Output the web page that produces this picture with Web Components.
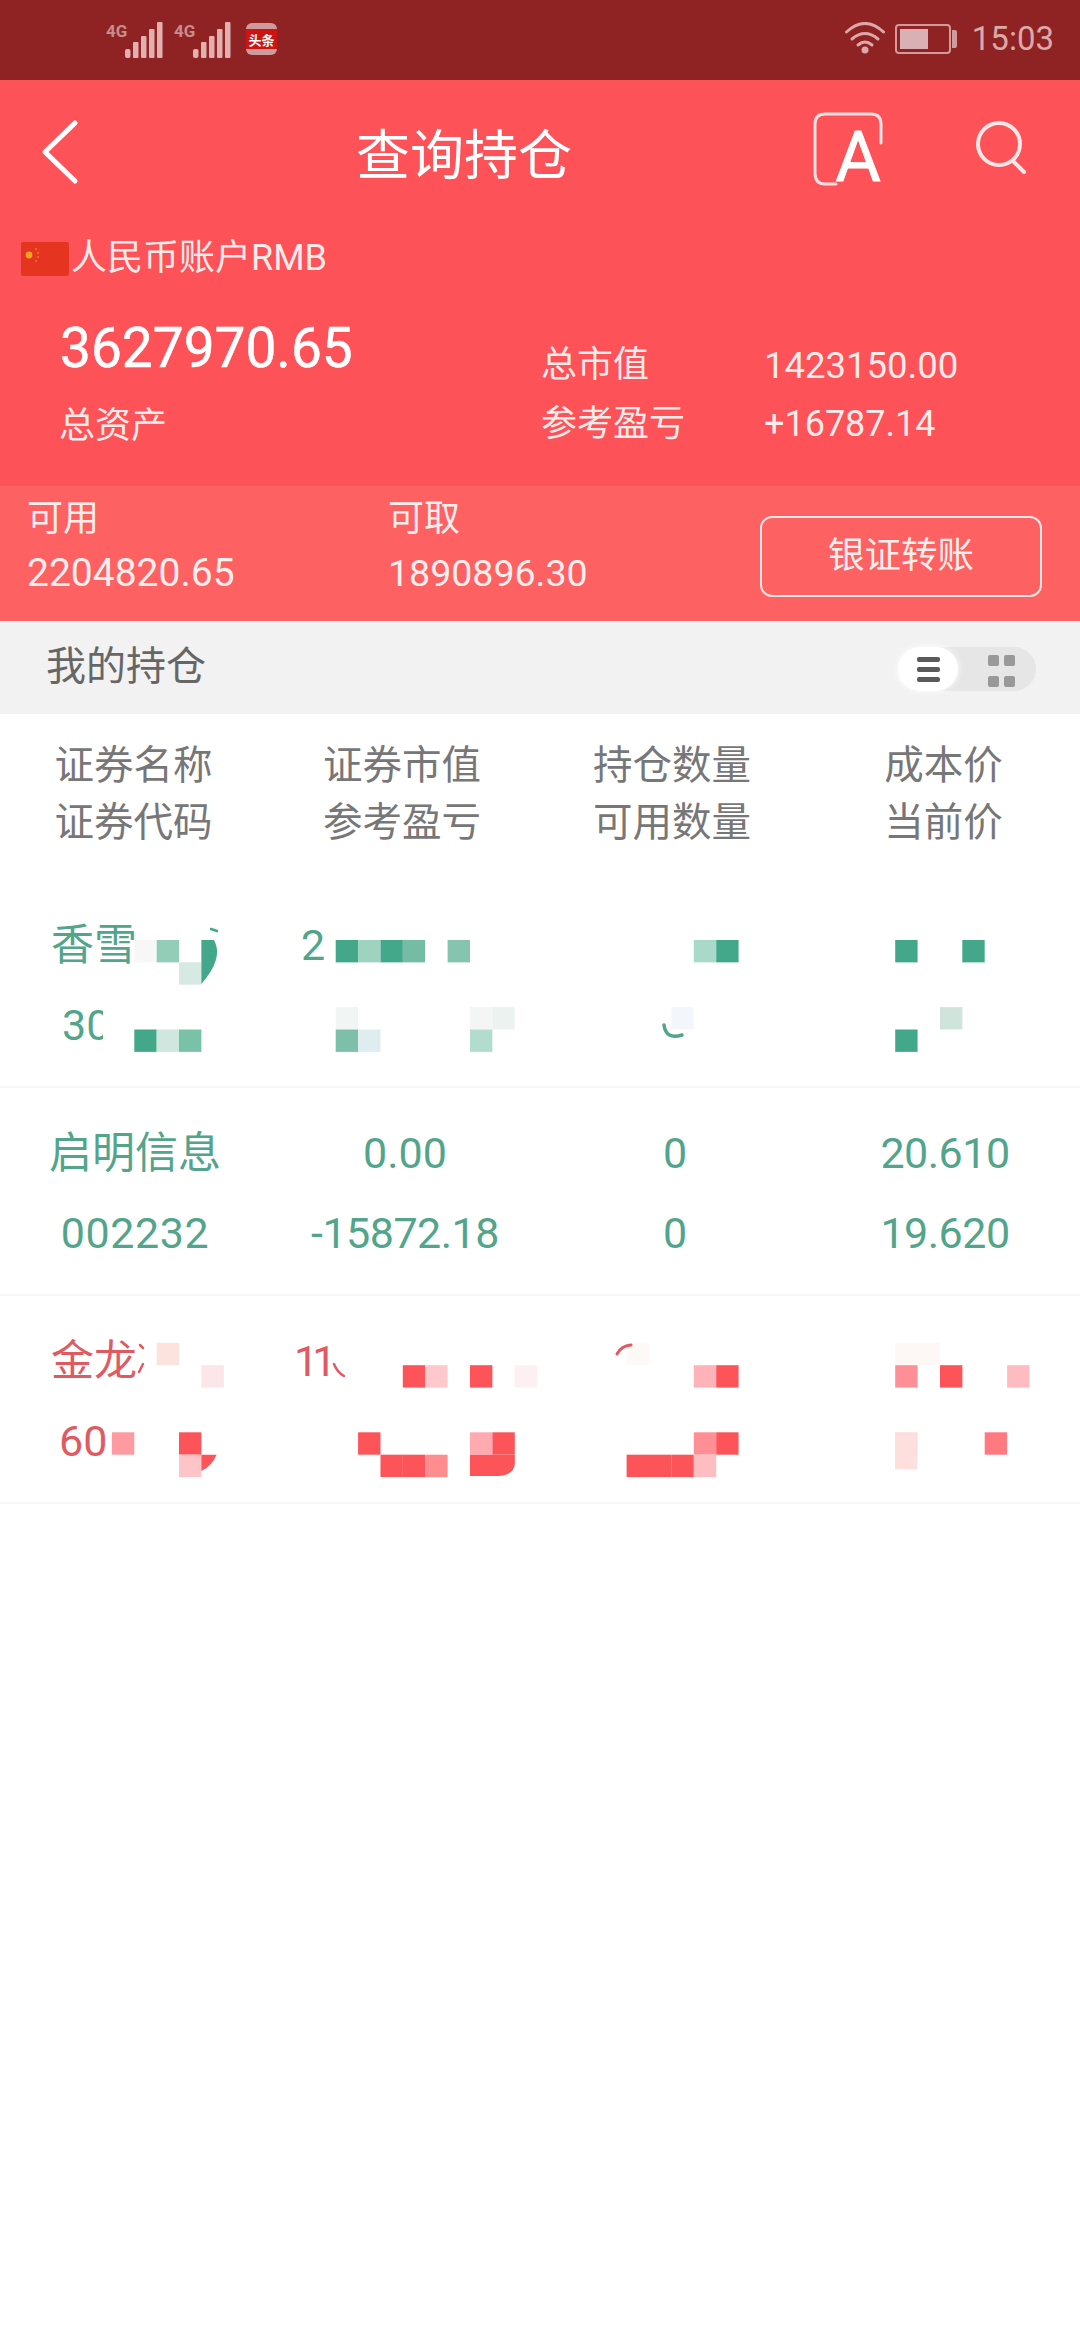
<!DOCTYPE html>
<html lang="zh-CN">
<head>
<meta charset="utf-8">
<title>查询持仓</title>
<style>
  html, body { margin: 0; background: #fff; }
  body { font-family: Roboto, "Noto Sans CJK SC", sans-serif; }
  holdings-page { width: 1080px; height: 2340px; }
</style>
</head>
<body>
<holdings-page>
  <status-bar></status-bar>
  <nav-bar title="查询持仓"></nav-bar>
  <account-summary></account-summary>
  <funds-band></funds-band>
  <holdings-toolbar></holdings-toolbar>
  <holdings-head></holdings-head>
  <holding-row tone="down">
    <span class="lead" style="padding-left:51px">香雪</span>
    <span class="lead" style="padding-left:31px">2</span>
    <span></span>
    <span></span>
    <span class="lead" style="padding-left:62px">30</span>
    <span></span>
    <span></span>
    <span></span>
  </holding-row>
  <holding-row tone="down">
    <span>启明信息</span><span>0.00</span><span>0</span><span style="letter-spacing:-.5px">20.610</span>
    <span style="letter-spacing:.6px">002232</span><span style="letter-spacing:-.5px">-15872.18</span><span>0</span><span style="letter-spacing:-.5px">19.620</span>
  </holding-row>
  <holding-row tone="up">
    <span class="lead" style="padding-left:51px">金龙</span>
    <span class="lead" style="padding-left:24px;letter-spacing:-6px">11</span>
    <span></span>
    <span></span>
    <span class="lead" style="padding-left:59px">60</span>
    <span></span>
    <span></span>
    <span></span>
  </holding-row>
  <pixel-mosaic></pixel-mosaic>
</holdings-page>

<script>
class HoldingsPage extends HTMLElement {
  constructor() {
    super();
    this.attachShadow({ mode: 'open' });
    this.shadowRoot.innerHTML = `
      <style>
        :host {
          display: block;
          position: relative;
          overflow: hidden;
          background: #fff;
        }
      </style>
      <slot></slot>
    `;
  }
}

class StatusBar extends HTMLElement {
  constructor() {
    super();
    this.attachShadow({ mode: 'open' });
    const signal = `
      <div class="net">
        <span class="g">4G</span>
        <svg width="40" height="36" viewBox="0 0 40 36">
          <g fill="#e3b0b0">
            <rect x="1" y="27" width="5.5" height="9" rx="2"/>
            <rect x="9" y="20" width="5.5" height="16" rx="1"/>
            <rect x="17" y="14" width="5.5" height="22" rx="1"/>
            <rect x="25" y="7" width="5.5" height="29" rx="1"/>
            <rect x="33" y="0" width="5.5" height="36" rx="1"/>
          </g>
        </svg>
      </div>`;
    this.shadowRoot.innerHTML = `
      <style>
        :host {
          display: flex;
          box-sizing: border-box;
          height: 80px;
          padding: 22px 26px 0 106px;
          background: #8f2323;
          color: #dba9a9;
        }
        .net {
          display: flex;
          width: 58px;
          margin-right: 10px;
        }
        .g {
          width: 18px;
          font: 700 17px/18px Roboto, sans-serif;
          color: #c88c8c;
        }
        .app {
          display: flex;
          align-items: center;
          justify-content: center;
          box-sizing: border-box;
          width: 31px;
          height: 32px;
          margin: 1px 0 0 4px;
          border-radius: 6px;
          background: linear-gradient(#cf9a9a 0 6px, #cc1414 6px 26px, #cf9a9a 26px);
          color: #fff;
          font: 700 13px/1 "Noto Sans CJK SC", sans-serif;
        }
        .right {
          display: flex;
          margin-left: auto;
        }
        .battery {
          display: flex;
          align-items: center;
          margin-left: 10px;
          height: 30px;
          margin-top: 2px;
        }
        .shell {
          box-sizing: border-box;
          width: 56px;
          height: 30px;
          padding: 3px;
          border: 2px solid #d39a9a;
          border-radius: 4px;
        }
        .level {
          width: 28px;
          height: 100%;
          background: #d9b0b4;
        }
        .nub {
          width: 5px;
          height: 18px;
          margin-left: 1px;
          background: #d39a9a;
          border-radius: 0 2px 2px 0;
        }
        .time {
          margin: 0 0 0 15px;
          font: 400 33px/34px Roboto, sans-serif;
          color: #dba9a9;
        }
      </style>
      ${signal}${signal}
      <div class="app">头条</div>
      <div class="right">
        <svg width="40" height="32" viewBox="0 0 40 32" fill="none" stroke="#dba9a9" stroke-width="3" stroke-linecap="round">
          <path d="M1.5 10Q20 -7 38.5 10"/>
          <path d="M7 17Q20 6 33 17"/>
          <path d="M13 23Q20 17 27 23"/>
          <circle cx="20" cy="28" r="3.5" fill="#dba9a9" stroke="none"/>
        </svg>
        <div class="battery">
          <div class="shell"><div class="level"></div></div>
          <div class="nub"></div>
        </div>
        <div class="time">15:03</div>
      </div>
    `;
  }
}

class NavBar extends HTMLElement {
  static get observedAttributes() {
    return ['title'];
  }

  constructor() {
    super();
    this.attachShadow({ mode: 'open' });
  }

  connectedCallback() {
    this.render();
  }

  attributeChangedCallback() {
    this.render();
  }

  render() {
    this.shadowRoot.innerHTML = `
      <style>
        :host {
          display: grid;
          grid-template-columns: 356px auto 1fr;
          align-items: center;
          height: 143px;
          background: #fd5257;
          color: #fff;
        }
        .back { margin-left: 39px; display: block; }
        h1 {
          margin: 0;
          font: 400 54px/143px "Noto Sans CJK SC", sans-serif;
        }
        .tools {
          display: flex;
          justify-content: flex-end;
          align-items: flex-start;
          gap: 92px;
          padding-right: 53px;
          height: 143px;
        }
        .font-btn {
          position: relative;
          width: 70px;
          height: 74px;
          margin-top: 32px;
        }
        .font-btn svg { display: block; }
        .font-btn span {
          position: absolute;
          right: 2px;
          bottom: -12px;
          font: 400 70px/82px Roboto, sans-serif;
          color: #fff;
          -webkit-text-stroke: .8px #fff;
        }
        .search { margin-top: 40px; display: block; }
      </style>
      <svg class="back" width="42" height="68" viewBox="0 0 42 68" fill="none" stroke="#fff" stroke-width="5" stroke-linecap="round" stroke-linejoin="round">
        <path d="M36 5L6 34L36 63"/>
      </svg>
      <h1>${this.getAttribute('title') || ''}</h1>
      <div class="tools">
        <div class="font-btn">
          <svg width="70" height="74" viewBox="0 0 70 74" fill="none" stroke="#fde0e0" stroke-width="3" stroke-linecap="round">
            <path d="M68 31V12Q68 2 58 2H12Q2 2 2 12V61Q2 72 12 72H23"/>
          </svg>
          <span>A</span>
        </div>
        <svg class="search" width="52" height="54" viewBox="0 0 52 54" fill="none" stroke="#fde6e6" stroke-width="4" stroke-linecap="round">
          <circle cx="24" cy="24" r="21"/>
          <path d="M38 41L49 52"/>
        </svg>
      </div>
    `;
  }
}

class AccountSummary extends HTMLElement {
  constructor() {
    super();
    this.attachShadow({ mode: 'open' });
    this.shadowRoot.innerHTML = `
      <style>
        :host {
          display: block;
          height: 263px;
          background: #fd5257;
          color: #fdeaea;
          font-family: Roboto, "Noto Sans CJK SC", sans-serif;
        }
        .account {
          display: flex;
          align-items: center;
          gap: 2px;
          height: 70px;
          padding-left: 21px;
          font-size: 36px;
          line-height: 70px;
        }
        .flag { display: block; margin-top: 1px; }
        .body {
          display: grid;
          grid-template-columns: 482px 223px auto;
          height: 193px;
          padding-left: 59px;
        }
        .total {
          padding-top: 25px;
        }
        .amount {
          margin-left: 1px;
          font-size: 55px;
          line-height: 60px;
          color: #fff;
          -webkit-text-stroke: .5px #fff;
        }
        .caption {
          margin-top: 20px;
          font-size: 36px;
          line-height: 56px;
        }
        .stats {
          padding-top: 43px;
          font-size: 36px;
          line-height: 59px;
        }
        .nums div:first-child { font-size: 36.5px; }
      </style>
      <div class="account">
        <svg class="flag" width="48" height="34" viewBox="0 0 48 34">
          <rect width="48" height="34" rx="2" fill="#e5341f"/>
          <circle cx="8" cy="13" r="3.4" fill="#f5a21f"/>
          <g fill="#ee7a22">
            <circle cx="15" cy="7" r="1"/><circle cx="17" cy="11" r="1"/>
            <circle cx="17" cy="15" r="1"/><circle cx="15" cy="19" r="1"/>
          </g>
        </svg>
        <span>人民币账户RMB</span>
      </div>
      <div class="body">
        <div class="total">
          <div class="amount">3627970.65</div>
          <div class="caption">总资产</div>
        </div>
        <div class="stats"><div>总市值</div><div>参考盈亏</div></div>
        <div class="stats nums"><div>1423150.00</div><div>+16787.14</div></div>
      </div>
    `;
  }
}

class FundsBand extends HTMLElement {
  constructor() {
    super();
    this.attachShadow({ mode: 'open' });
    this.shadowRoot.innerHTML = `
      <style>
        :host {
          display: flex;
          box-sizing: border-box;
          height: 135px;
          padding: 7px 38px 0 27px;
          background: #fe6162;
          color: #fdeeee;
          font-family: Roboto, "Noto Sans CJK SC", sans-serif;
        }
        .fund { width: 361px; }
        .fund.second { width: auto; }
        .name { font-size: 36px; line-height: 52px; }
        .value { font-size: 37.5px; line-height: 56px; }
        .fund:not(.second) .value { font-size: 39px; }
        .transfer {
          box-sizing: border-box;
          width: 282px;
          height: 81px;
          margin: 23px 0 0 auto;
          border: 2.5px solid #fde6e6;
          border-radius: 12px;
          text-align: center;
          font-size: 36.5px;
          line-height: 76px;
        }
      </style>
      <div class="fund"><div class="name">可用</div><div class="value">2204820.65</div></div>
      <div class="fund second"><div class="name">可取</div><div class="value">1890896.30</div></div>
      <div class="transfer">银证转账</div>
    `;
  }
}

class HoldingsToolbar extends HTMLElement {
  constructor() {
    super();
    this.attachShadow({ mode: 'open' });
    this.shadowRoot.innerHTML = `
      <style>
        :host {
          display: flex;
          align-items: center;
          justify-content: space-between;
          box-sizing: border-box;
          height: 93px;
          padding: 0 44px 0 46px;
          background: #f2f2f2;
          color: #666;
          font: 400 40px/1 "Noto Sans CJK SC", sans-serif;
        }
        .label { margin-bottom: 9px; }
        .toggle {
          display: flex;
          width: 138px;
          height: 44px;
          margin-top: 3px;
          border-radius: 22px;
          background: #e6e6e6;
        }
        .on {
          display: flex;
          flex-direction: column;
          justify-content: center;
          gap: 5px;
          box-sizing: border-box;
          width: 60px;
          padding-left: 19px;
          border-radius: 22px;
          background: #fff;
          box-shadow: 0 0 6px #fff;
        }
        .on i {
          display: block;
          width: 23px;
          height: 5px;
          border-radius: 2px;
          background: #5a5a5a;
        }
        .off {
          display: grid;
          grid-template-columns: 11px 11px;
          gap: 5px;
          margin: 8px 0 0 30px;
        }
        .off i {
          display: block;
          width: 11px;
          height: 11px;
          border-radius: 2px;
          background: #999;
        }
      </style>
      <div class="label">我的持仓</div>
      <div class="toggle">
        <div class="on"><i></i><i></i><i></i></div>
        <div class="off"><i></i><i></i><i></i><i></i></div>
      </div>
    `;
  }
}

class HoldingsHead extends HTMLElement {
  constructor() {
    super();
    this.attachShadow({ mode: 'open' });
    const cols = [
      ['证券名称', '证券代码'],
      ['证券市值', '参考盈亏'],
      ['持仓数量', '可用数量'],
      ['成本价', '当前价']
    ];
    this.shadowRoot.innerHTML = `
      <style>
        :host {
          display: grid;
          grid-template-columns: 267px 270px 270px 273px;
          box-sizing: border-box;
          height: 166px;
          padding-top: 19px;
          text-align: center;
          color: #777;
          font: 400 39.5px/57px "Noto Sans CJK SC", sans-serif;
        }
      </style>
      ${cols.map(c => `<div><div>${c[0]}</div><div>${c[1]}</div></div>`).join('')}
    `;
  }
}

class HoldingRow extends HTMLElement {
  constructor() {
    super();
    this.attachShadow({ mode: 'open' });
    this.shadowRoot.innerHTML = `
      <style>
        :host {
          display: grid;
          grid-template-columns: repeat(4, 270px);
          grid-auto-rows: 80px;
          align-content: center;
          box-sizing: border-box;
          height: 208px;
          padding-top: 3px;
          border-bottom: 2px solid #f6f6f6;
          font-family: Roboto, "Noto Sans CJK SC", sans-serif;
          font-size: 43px;
          line-height: 80px;
          text-align: center;
          color: #52a58b;
        }
        :host([tone="up"]) { color: #e05a62; }
        ::slotted(.lead) {
          text-align: left;
          white-space: nowrap;
        }
      </style>
      <slot></slot>
    `;
  }
}

// the redaction tiles sit on one page wide grid, so they are kept in page units
class PixelMosaic extends HTMLElement {
  constructor() {
    super();
    this.attachShadow({ mode: 'open' });
    const G = '#43a889', R = '#fc5459';
    const cells = [
      [6,42,'#f7f7f7'],[7,42,'#93cdb8'],[8,43,'#d7e9e3'],
      [15,42,G],[16,42,'#9ed3c0'],[17,42,G],[18,42,'#74bca3'],[20,42,'#85c4ae'],
      [31,42,'#a9dac9'],[32,42,G],[40,42,G],[43,42,G],
      [15,45,'#f1f6f4'],[21,45,'#f3f6f5'],[22,45,'#ebf2f0'],[30,45,'#f3f6fb'],[42,45,'#cfe5dc'],
      [6,46,G],[7,46,'#cfe7de'],[8,46,'#79c2a8'],[15,46,'#7dbfa8'],[16,46,'#dfecf0'],[21,46,'#b2dccd'],[40,46,G],
      [7,60,'#fde3de'],[28,60,'#fdf9f7'],[40,60,'#fdf8f6'],[41,60,'#fdf8f6'],
      [9,61,'#fce6ea'],[18,61,R],[19,61,'#fec8cd'],[21,61,R],[23,61,'#fdf0f2'],
      [31,61,'#feb3b8'],[32,61,R],[40,61,'#fe8f96'],[42,61,R],[45,61,'#febbc0'],
      [5,64,'#fe9ba0'],[8,64,R],[16,64,R],[21,64,'#feaab0'],[22,64,R],
      [31,64,'#fe9095'],[32,64,R],[40,64,'#fde0de'],[44,64,'#fe7a80'],
      [8,65,'#fec5c8'],[17,65,R],[18,65,R],[19,65,'#fe8d90'],
      [28,65,R],[29,65,R],[30,65,R],[31,65,'#febdc0']
    ];
    const step = 22.38;
    const tiles = cells.map(([k, j, c]) =>
      `<rect x="${(k * step).toFixed(1)}" y="${(j * step).toFixed(1)}" width="${step}" height="${step}" fill="${c}"/>`
    ).join('');
    this.shadowRoot.innerHTML = `
      <style>
        :host {
          position: absolute;
          top: 0;
          left: 0;
          width: 1080px;
          height: 2340px;
          pointer-events: none;
        }
        svg { display: block; }
      </style>
      <svg width="1080" height="2340" viewBox="0 0 1080 2340">
        <rect x="103" y="1000" width="32" height="50" fill="#fff"/>
        ${tiles}
        <rect x="895" y="1432.3" width="22.4" height="37" fill="#fde0de"/>
        <path d="M201.4 940H214Q224 958 201.4 984Z" fill="${G}"/>
        <path d="M201.4 1454.7H216.6Q212 1466 201.4 1471Z" fill="${R}"/>
        <path d="M470 1454.7H514.8V1464Q514 1475 498 1476H470Z" fill="${R}"/>
        <g fill="none" stroke-linecap="round" stroke-width="2.5">
          <path d="M211 929L217 931" stroke="${G}"/>
          <path d="M664 1025Q666 1040 682 1035" stroke="#52a58b" stroke-width="3.5"/>
          <path d="M617 1354Q621 1346 631 1345" stroke="#e05a62" stroke-width="3"/>
          <path d="M334 1364Q337 1372 344 1376" stroke="#e05a62"/>
          <path d="M140 1345L143 1348M139 1372L143 1364" stroke="#e05a62"/>
        </g>
      </svg>
    `;
  }
}

customElements.define('holdings-page', HoldingsPage);
customElements.define('status-bar', StatusBar);
customElements.define('nav-bar', NavBar);
customElements.define('account-summary', AccountSummary);
customElements.define('funds-band', FundsBand);
customElements.define('holdings-toolbar', HoldingsToolbar);
customElements.define('holdings-head', HoldingsHead);
customElements.define('holding-row', HoldingRow);
customElements.define('pixel-mosaic', PixelMosaic);
</script>
</body>
</html>
